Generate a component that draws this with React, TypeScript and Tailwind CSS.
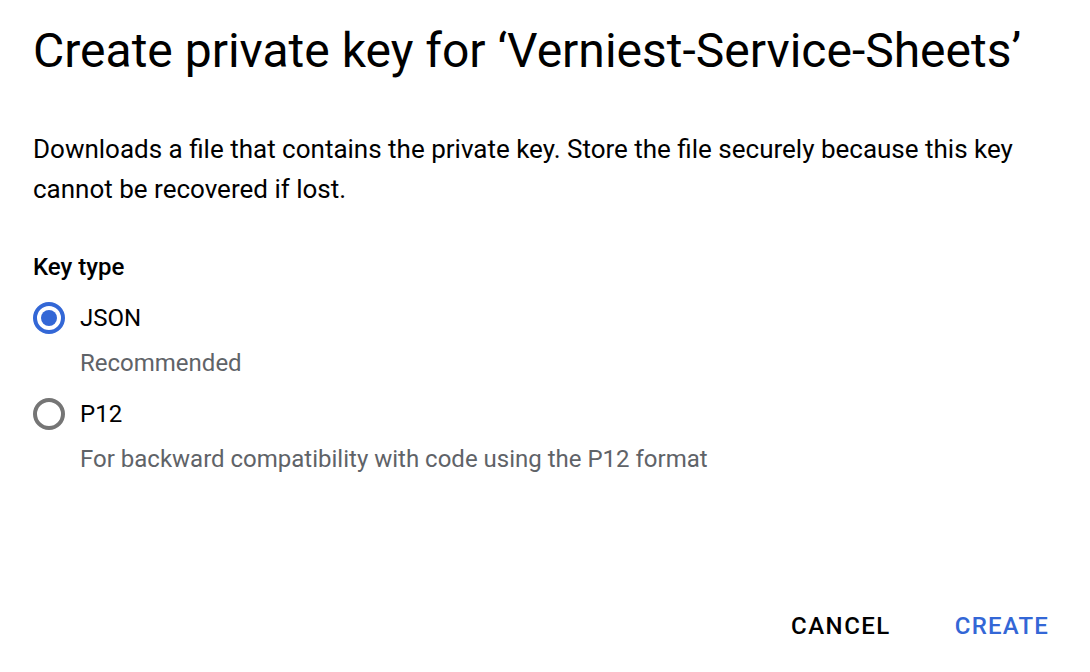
import React from "react";

export default function App() {
  return (
    <div
      className="w-[1090px] h-[672px] bg-white flex flex-col text-black"
      style={{ fontFamily: "Roboto, 'Noto Sans', sans-serif" }}
    >
      <div className="pl-[33px] pr-[20px] pt-[23px] flex flex-col flex-1">
        <h1 className="text-[48px] leading-[56px] font-normal tracking-[0px]">
          Create private key for ‘Verniest-Service-Sheets’
        </h1>
        <p className="mt-[50px] text-[26px] leading-[40px] w-[1030px]">
          Downloads a file that contains the private key. Store the file securely because this key cannot be recovered if lost.
        </p>
        <div className="mt-[42px] text-[24px] leading-[32px] font-medium">Key type</div>
        <div className="mt-[15px] flex flex-col">
          <div className="flex items-center h-[40px]">
            <div className="w-[32px] h-[32px] rounded-full border-[4px] border-[#3367d6] flex items-center justify-center">
              <div className="w-[16px] h-[16px] rounded-full bg-[#3367d6]" />
            </div>
            <span className="ml-[15px] text-[24px]">JSON</span>
          </div>
          <div className="ml-[47px] mt-[5px] text-[24px] leading-[40px] text-[#5f6368]">Recommended</div>
          <div className="flex items-center h-[40px] mt-[11px]">
            <div className="w-[32px] h-[32px] rounded-full border-[4px] border-[#757575]" />
            <span className="ml-[15px] text-[24px]">P12</span>
          </div>
          <div className="ml-[47px] mt-[5px] text-[24px] leading-[40px] text-[#5f6368]">
            For backward compatibility with code using the P12 format
          </div>
        </div>
        <div className="flex-1" />
        <div className="flex justify-end items-center gap-[64px] pb-[26px] pr-[21px]">
          <button className="text-[24px] font-medium tracking-[1.5px] text-black leading-[40px]">CANCEL</button>
          <button className="text-[24px] font-medium tracking-[1.2px] text-[#3367d6] leading-[40px]">CREATE</button>
        </div>
      </div>
    </div>
  );
}
